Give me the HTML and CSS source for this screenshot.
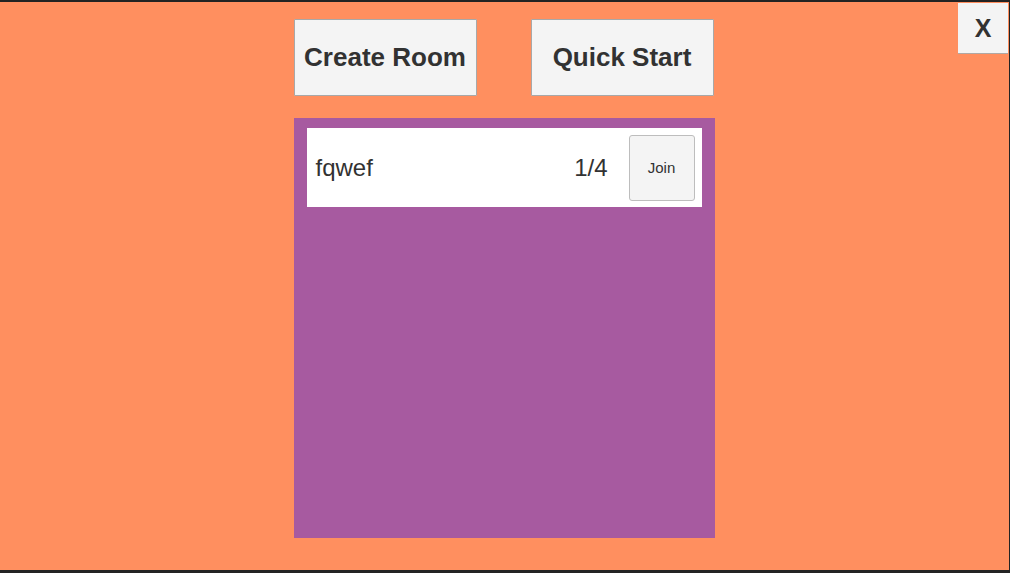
FILE: index.html
```html
<!DOCTYPE html>
<html lang="en">
<head>
  <meta charset="UTF-8" />
  <title>Lobby</title>
  <link rel="stylesheet" href="styles.css">
</head>
<body>
  <div class="screen">
    <button class="close-btn">X</button>
    <div class="top-bar">
      <button class="big-btn">Create Room</button>
      <button class="big-btn">Quick Start</button>
    </div>
    <div class="room-list">
      <div class="room-row">
        <span class="room-name">fqwef</span>
        <span class="room-count">1/4</span>
        <button class="join-btn">Join</button>
      </div>
    </div>
  </div>
</body>
</html>
```

FILE: styles.css
```css
body {
  margin: 0;
  background: #232323;
  font-family: "Liberation Sans", Arial, sans-serif;
  padding: 2px 1px 3px 0;
}
.screen {
  position: relative;
  height: 568px;
  background: #ff8f5f;
  display: flex;
  flex-direction: column;
  align-items: center;
  padding-top: 17px;
  box-sizing: border-box;
}
button {
  font-family: inherit;
  color: #323232;
  background: #f4f4f4;
  border: 1px solid #a8a8a8;
  cursor: pointer;
}
.top-bar {
  display: flex;
  gap: 54px;
  margin-right: 2px;
}
.big-btn {
  width: 183px;
  height: 77px;
  font-size: 26px;
  font-weight: bold;
  padding: 0;
  border-radius: 1px;
}
.close-btn {
  position: absolute;
  top: 1px;
  right: 1px;
  width: 50px;
  height: 51px;
  font-size: 25px;
  font-weight: bold;
  border: none;
  border-bottom: 1px solid #b0a8a4;
  padding: 0;
}
.room-list {
  margin-top: 22px;
  margin-right: 1px;
  width: 421px;
  height: 420px;
  background: #a75aa0;
  padding: 10px 13px;
  box-sizing: border-box;
}
.room-row {
  background: #fff;
  height: 79px;
  display: flex;
  align-items: center;
  padding: 0 7px 0 9px;
  color: #323232;
  font-size: 24px;
}
.room-name {
  flex: 1;
}
.room-count {
  margin-right: 21px;
}
.join-btn {
  width: 66px;
  height: 66px;
  font-size: 15px;
  border-radius: 3px;
  border-color: #bdbdbd;
}
```
